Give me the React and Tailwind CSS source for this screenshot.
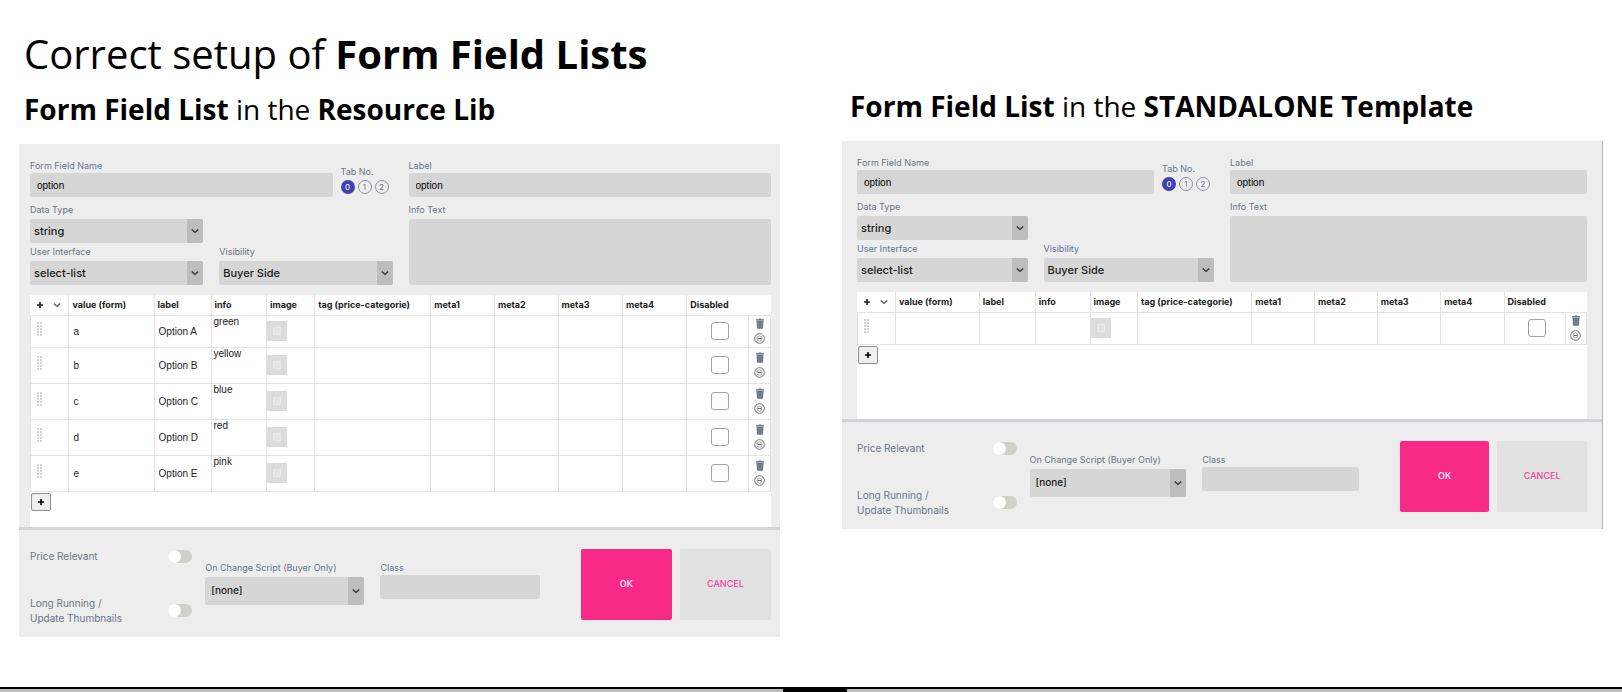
import { useId, useState } from "react";

const COLUMNS = [
  { name: "value (form)", width: "w-[11.5%]" },
  { name: "label", width: "w-[7.7%]" },
  { name: "info", width: "w-[7.5%]" },
  { name: "image", width: "w-[6.5%]" },
  { name: "tag (price-categorie)", width: "w-[15.7%]" },
  { name: "meta1", width: "w-[8.6%]" },
  { name: "meta2", width: "w-[8.6%]" },
  { name: "meta3", width: "w-[8.7%]" },
  { name: "meta4", width: "w-[8.7%]" },
];

const EMPTY_COLUMNS = ["tag", "meta1", "meta2", "meta3", "meta4"];

const RESOURCE_ROWS = [
  { value: "a", label: "Option A", info: "green" },
  { value: "b", label: "Option B", info: "yellow" },
  { value: "c", label: "Option C", info: "blue" },
  { value: "d", label: "Option D", info: "red" },
  { value: "e", label: "Option E", info: "pink" },
];

const STANDALONE_ROWS = [{ value: "", label: "", info: "" }];

const ChevronDown = ({ className }) => (
  <svg viewBox="0 0 8 8" className={className} fill="none" stroke="currentColor" strokeWidth="1.4">
    <path d="M0.8 2.4 4 5.4 7.2 2.4" />
  </svg>
);

const PlusIcon = () => (
  <svg viewBox="0 0 6 6" className="size-[6px]" fill="none" stroke="currentColor" strokeWidth="1.6">
    <path d="M3 0v6M0 3h6" />
  </svg>
);

const GripIcon = () => (
  <svg viewBox="0 0 5 14" className="h-[14px] w-[5px]" fill="#d3d3d3">
    {[0, 3, 6, 9, 12].map((y) => (
      <g key={y}>
        <rect x="0" y={y} width="2" height="2" />
        <rect x="3" y={y} width="2" height="2" />
      </g>
    ))}
  </svg>
);

const TrashIcon = () => (
  <svg viewBox="0 0 8 11" className="h-[11px] w-[8px]">
    <path d="M0 1.2h2.4L3 0.4h2l0.6 0.8H8v1.2H0z" fill="#64748b" />
    <path d="M0.5 2.8h7L7.1 9.8a1 1 0 0 1-1 0.9H1.9a1 1 0 0 1-1-0.9z" fill="#6b788a" />
    <path d="M2.8 4v5.4M5.2 4v5.4" stroke="#8b96a5" strokeWidth="0.6" />
  </svg>
);

const CircleMinusIcon = () => (
  <svg viewBox="0 0 11 11" className="size-[11px]" fill="none" stroke="#666">
    <circle cx="5.5" cy="5.5" r="4.8" strokeWidth="0.9" />
    <circle cx="5.5" cy="5.5" r="2.6" strokeWidth="0.5" />
    <path d="M3.6 5.5h3.8" strokeWidth="1.2" />
  </svg>
);

const Label = ({ htmlFor, children }) => (
  <label htmlFor={htmlFor} className="block text-[9px] leading-[14px] whitespace-nowrap text-[#69758a]">
    {children}
  </label>
);

const TextInput = ({ id, defaultValue }) => (
  <input
    id={id}
    type="text"
    defaultValue={defaultValue}
    className="block h-6 w-full rounded-xs bg-[#d6d6d6] px-[7px] font-['Liberation_Sans',sans-serif] text-[10px] text-black"
  />
);

const Select = ({ id, option, className }) => (
  <div className="relative mt-[2px]">
    <select
      id={id}
      className={`block w-full appearance-none rounded-xs bg-[#d6d6d6] font-medium text-[#1a1a1a] ${className}`}
    >
      <option>{option}</option>
    </select>
    <span className="pointer-events-none absolute inset-y-0 right-0 flex w-4 items-center justify-center rounded-r-xs bg-[#bdbdbd] text-[#333]">
      <ChevronDown className="size-2" />
    </span>
  </div>
);

const Switch = ({ id }) => (
  <input
    id={id}
    type="checkbox"
    role="switch"
    className="block h-[13px] w-6 shrink-0 appearance-none rounded-full bg-[#cfd0c8] before:block before:size-[13px] before:rounded-full before:bg-white"
  />
);

const TabNumbers = () => {
  const [active, setActive] = useState(0);

  return (
    <div role="group" aria-label="Tab No." className="w-[52px] pt-[6px]">
      <div className="text-[9px] leading-[14px] text-[#69758a]">Tab No.</div>
      <div className="flex gap-[3px] pt-px">
        {[0, 1, 2].map((number) => (
          <button
            key={number}
            type="button"
            onClick={() => setActive(number)}
            className={
              active === number
                ? "flex size-[14px] items-center justify-center rounded-full bg-[#4340b5] text-[8px] leading-none text-white"
                : "flex size-[14px] items-center justify-center rounded-full border border-[#8c92a0] text-[8px] leading-none text-[#6f7787]"
            }
          >
            {number}
          </button>
        ))}
      </div>
    </div>
  );
};

const cell = "border border-[#e3e3e3] p-0";

const OptionRow = ({ row }) => (
  <tr className="h-9 first:h-8">
    <td className={`${cell} pb-1 pl-[6px]`}>
      <GripIcon />
    </td>
    <td className={cell}>
      <input aria-label="value" defaultValue={row.value} className="block w-full pl-1" />
    </td>
    <td className={cell}>
      <input aria-label="label" defaultValue={row.label} className="block w-full pl-1" />
    </td>
    <td className={`${cell} align-top`}>
      <textarea
        aria-label="info"
        defaultValue={row.info}
        className="block h-[30px] w-full resize-none overflow-hidden pl-[2px] leading-3"
      />
    </td>
    <td className={cell}>
      <button type="button" aria-label="image" className="flex size-5 items-center justify-center bg-[#dcdcdc]">
        <span className="size-2 border border-[#ebebeb] bg-[#e3e3e3]" />
      </button>
    </td>
    {EMPTY_COLUMNS.map((name) => (
      <td key={name} className={cell}>
        <input aria-label={name} className="block w-full pl-1" />
      </td>
    ))}
    <td className={`${cell} pl-1`}>
      <input
        type="checkbox"
        aria-label="Disabled"
        className="mx-auto block size-[18px] appearance-none rounded-[3px] border border-[#a3a3a3] bg-white"
      />
    </td>
    <td className={cell}>
      <div className="flex flex-col items-center gap-1">
        <button type="button" aria-label="Delete">
          <TrashIcon />
        </button>
        <button type="button" aria-label="Clear">
          <CircleMinusIcon />
        </button>
      </div>
    </td>
  </tr>
);

const OptionTable = ({ rows }) => (
  <table className="w-full table-fixed border-collapse text-[#222]">
    <colgroup>
      <col className="w-[5.2%]" />
      {COLUMNS.map((column) => (
        <col key={column.name} className={column.width} />
      ))}
      <col className="w-[8.4%]" />
      <col className="w-[2.9%]" />
    </colgroup>
    <thead>
      <tr className="h-5 text-left text-[9px] whitespace-nowrap">
        <th className="border-r border-b border-[#e3e3e3] p-0">
          <div className="flex items-center gap-[10px] pl-[6px]">
            <PlusIcon />
            <ChevronDown className="size-2 text-[#555]" />
          </div>
        </th>
        {COLUMNS.map((column) => (
          <th key={column.name} className="border-r border-b border-[#e3e3e3] p-0 pl-[3px] font-bold">
            {column.name}
          </th>
        ))}
        <th colSpan={2} className="border-b border-[#e3e3e3] p-0 pl-[3px] font-bold">
          Disabled
        </th>
      </tr>
    </thead>
    <tbody className="font-['Liberation_Sans',sans-serif] text-[10px]">
      {rows.map((row, index) => (
        <OptionRow key={index} row={row} />
      ))}
    </tbody>
  </table>
);

const FormFieldPanel = ({ rows, className, inset, spacer }) => {
  const id = useId();

  return (
    <form className={`bg-[#ededed] font-[Inter,sans-serif] ${className}`} onSubmit={(event) => event.preventDefault()}>
      <div className={`grid grid-cols-2 gap-4 pt-[15px] ${inset}`}>
        <div>
          <div className="flex gap-2">
            <div className="flex-1">
              <Label htmlFor={`${id}-name`}>Form Field Name</Label>
              <TextInput id={`${id}-name`} defaultValue="option" />
            </div>
            <TabNumbers />
          </div>
          <div className="grid grid-cols-2 gap-x-4 gap-y-[2px] pt-[6px]">
            <div>
              <Label htmlFor={`${id}-type`}>Data Type</Label>
              <Select id={`${id}-type`} option="string" className="h-6 px-1 text-[11px]" />
            </div>
            <div className="col-start-1">
              <Label htmlFor={`${id}-ui`}>User Interface</Label>
              <Select id={`${id}-ui`} option="select-list" className="h-6 px-1 text-[11px]" />
            </div>
            <div>
              <Label htmlFor={`${id}-visibility`}>Visibility</Label>
              <Select id={`${id}-visibility`} option="Buyer Side" className="h-6 px-1 text-[11px]" />
            </div>
          </div>
        </div>
        <div className="flex flex-col">
          <Label htmlFor={`${id}-label`}>Label</Label>
          <TextInput id={`${id}-label`} defaultValue="option" />
          <div className="pt-[6px] pb-[2px]">
            <Label htmlFor={`${id}-info`}>Info Text</Label>
          </div>
          <textarea id={`${id}-info`} className="block w-full flex-1 resize-none rounded-xs bg-[#d6d6d6] p-1 text-[10px]" />
        </div>
      </div>

      <div className={`pt-[10px] ${inset}`}>
        <div className={`bg-white ${spacer}`}>
          <OptionTable rows={rows} />
          <button
            type="button"
            aria-label="Add row"
            className="mt-px ml-px flex h-[18px] w-5 items-center justify-center rounded-xs border border-[#8f8f8f] bg-[#efefef]"
          >
            <PlusIcon />
          </button>
        </div>
      </div>

      <div className={`flex items-start border-t-[3px] border-[#d0d3d8] pt-[19px] pb-[11px] ${inset}`}>
        <div className="flex-[162] text-[10px] leading-[15px] text-[#69758a]">
          <div className="flex items-center justify-between">
            <label htmlFor={`${id}-price`}>Price Relevant</label>
            <Switch id={`${id}-price`} />
          </div>
          <div className="flex items-center justify-between pt-8">
            <label htmlFor={`${id}-long`}>
              Long Running /
              <br />
              Update Thumbnails
            </label>
            <Switch id={`${id}-long`} />
          </div>
        </div>
        <div className="ml-[13px] flex-[159] pt-3">
          <Label htmlFor={`${id}-script`}>On Change Script (Buyer Only)</Label>
          <Select id={`${id}-script`} option="[none]" className="h-7 px-[6px] text-[10px]" />
        </div>
        <div className="ml-4 flex-[159] pt-3">
          <Label htmlFor={`${id}-class`}>Class</Label>
          <TextInput id={`${id}-class`} />
        </div>
        <button type="submit" className="ml-[41px] h-[71px] flex-[91] rounded-xs bg-[#f72a87] text-[9px] font-medium text-white">
          OK
        </button>
        <button type="button" className="ml-2 h-[71px] flex-[91] rounded-xs bg-[#e1e1e1] text-[9px] font-medium text-[#f0479a]">
          CANCEL
        </button>
      </div>
    </form>
  );
};

const App = () => {
  return (
    <div className="flex min-h-screen flex-col bg-white font-['Open_Sans',sans-serif] text-black">
      <main className="flex-1 px-[19px] pt-[27px]">
        <h1 className="pl-[5px] text-[40px] leading-[54px]">
          Correct setup of <b>Form Field Lists</b>
        </h1>
        <div className="grid grid-cols-2 items-start gap-[62px]">
          <section className="pt-2">
            <h2 className="pb-[15px] pl-[5px] text-[28px] leading-10">
              <b>Form Field List</b> in the <b>Resource Lib</b>
            </h2>
            <FormFieldPanel rows={RESOURCE_ROWS} className="" inset="pl-[11px] pr-[9px]" spacer="pb-4" />
          </section>
          <section className="pt-[5px]">
            <h2 className="pb-[15px] pl-2 text-[28px] leading-10">
              <b>Form Field List</b> in the <b>STANDALONE Template</b>
            </h2>
            <FormFieldPanel
              rows={STANDALONE_ROWS}
              className="border-r border-[#b5b5b5]"
              inset="px-[15px]"
              spacer="pb-[55px]"
            />
          </section>
        </div>
      </main>
      <div className="flex h-[5px] gap-16 bg-black pt-[2px]">
        <div className="flex-[783] bg-[#bdbdbd]" />
        <div className="flex-[775] bg-[#bdbdbd]" />
      </div>
    </div>
  );
};

export default App;
